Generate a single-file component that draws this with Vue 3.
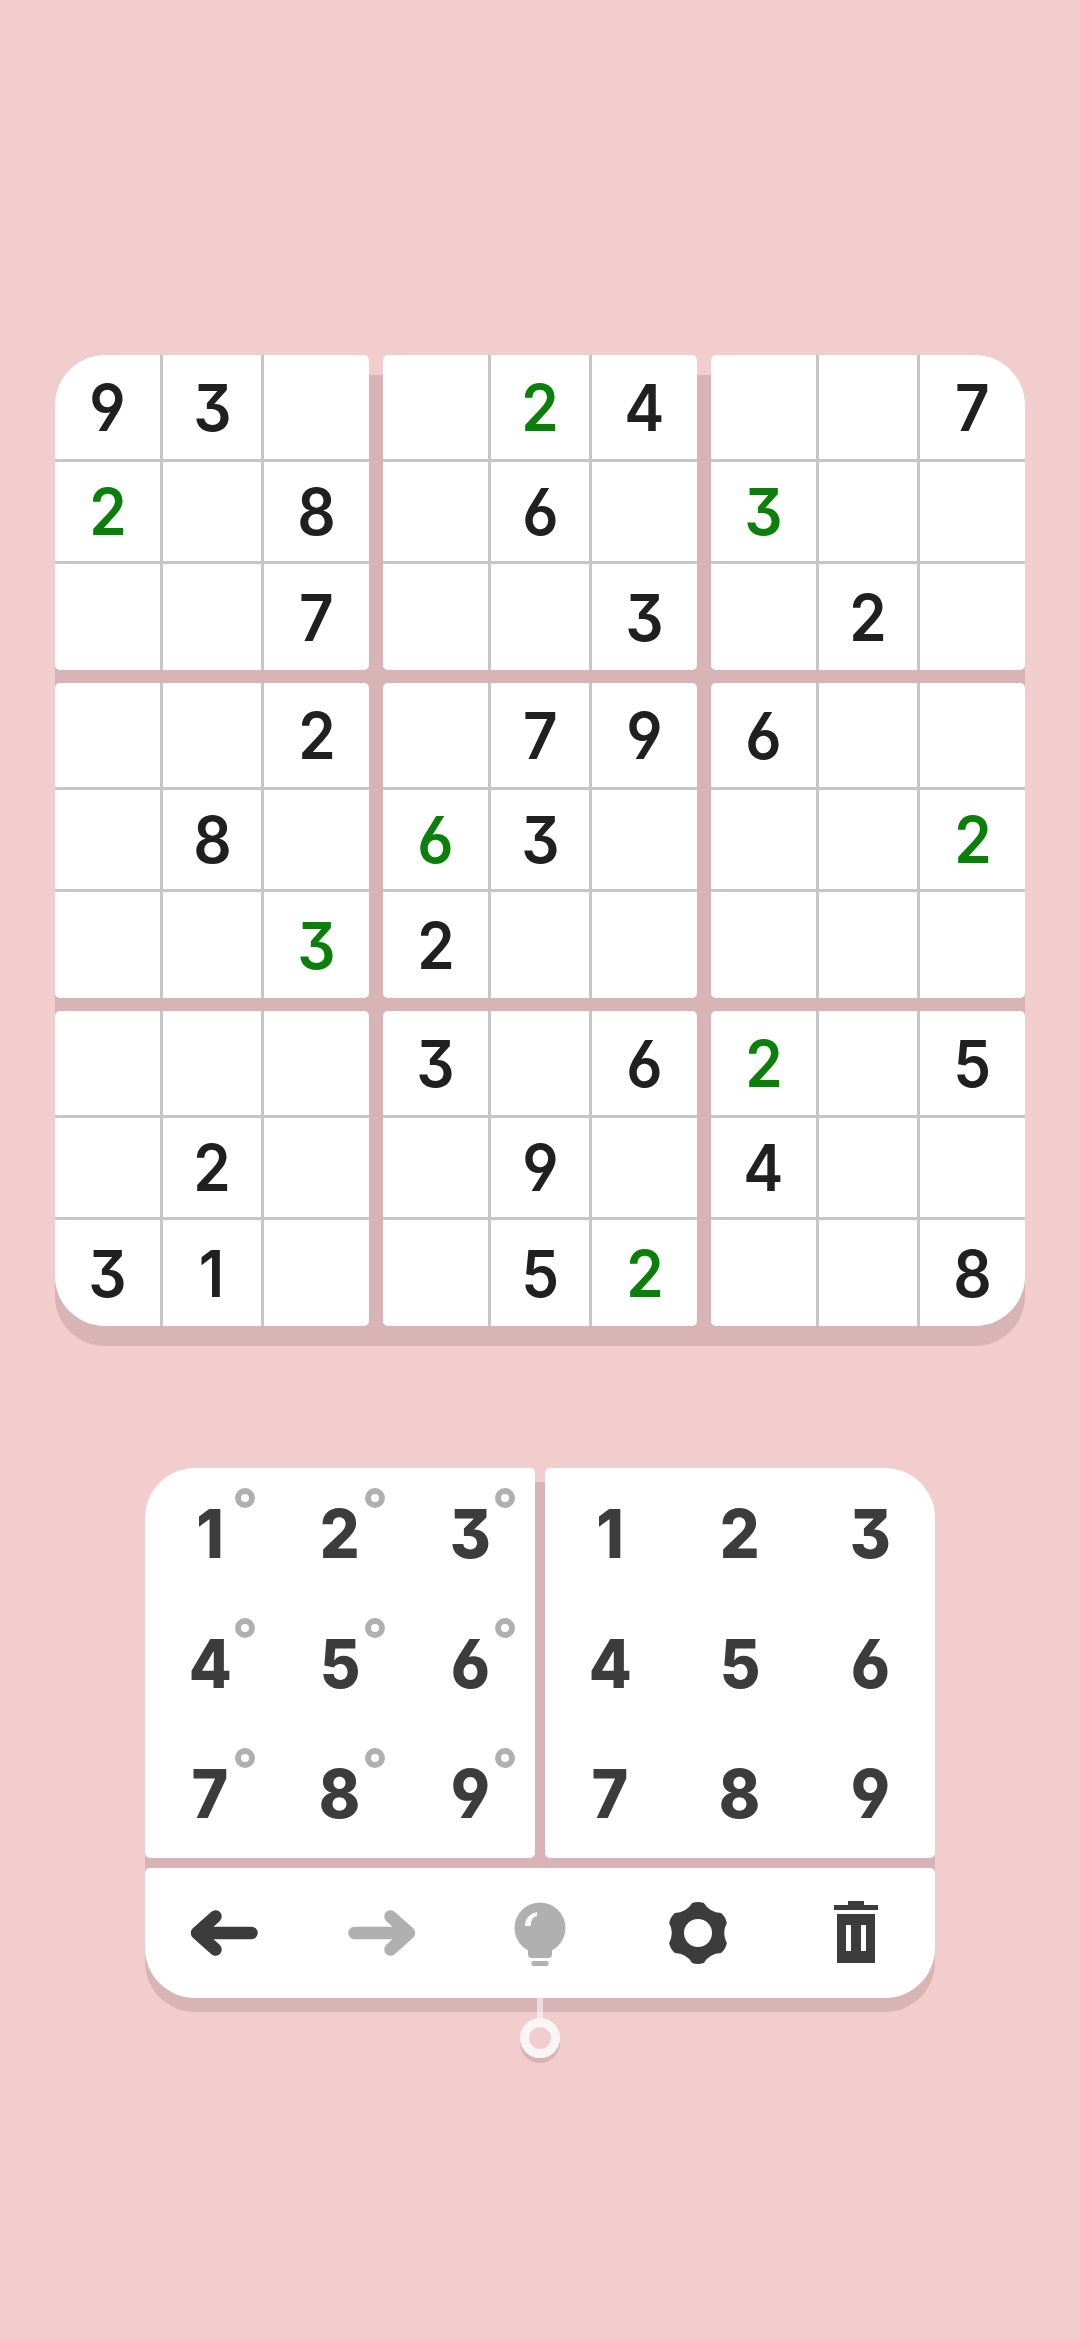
<template>
  <main class="page">
    <section class="board-wrap" aria-label="Sudoku board">
      <div class="board">
        <div
          v-for="(box, boxIndex) in boxes"
          :key="boxIndex"
          class="box"
          :class="cornerClass(boxIndex)"
        >
          <div v-for="(cell, cellIndex) in box" :key="cellIndex" class="cell" :class="{ solved: cell.solved }">
            <span class="digit">{{ cell.value }}</span>
          </div>
        </div>
      </div>
    </section>

    <section class="panel-wrap" aria-label="Controls">
      <div class="panel">
        <div class="keypads">
          <div class="keypad keypad-notes">
            <button v-for="n in digits" :key="n" type="button" class="key">
              <span class="digit">{{ n }}</span><span class="note-dot"></span>
            </button>
          </div>
          <div class="keypad keypad-plain">
            <button v-for="n in digits" :key="n" type="button" class="key">
              <span class="digit">{{ n }}</span>
            </button>
          </div>
        </div>

        <div class="toolbar">
          <button type="button" class="tool" aria-label="Undo">
            <svg width="80" height="60" viewBox="-40 -30 80 60">
              <path class="arrow dark" d="M27.500 0H-27L-8.500-16.500M-27 0L-8.500 16.500" />
            </svg>
          </button>
          <button type="button" class="tool" aria-label="Redo">
            <svg width="80" height="60" viewBox="-40 -30 80 60">
              <path class="arrow light" d="M-27.500 0H27L8.500-16.500M27 0L8.500 16.500" />
            </svg>
          </button>
          <button type="button" class="tool" aria-label="Hint">
            <svg width="60" height="70" viewBox="-30 -35 60 70">
              <circle cx="0" cy="-5" r="25.500" fill="#b0b0b0" />
              <path d="M-12 12H12V21Q12 25 8 25H-8Q-12 25-12 21Z" fill="#b0b0b0" />
              <rect x="-8.500" y="28" width="17" height="5" rx="2" fill="#b0b0b0" />
              <path d="M-15-7Q-15-18-3-21V-17Q-9-16-9.500-7Z" fill="#fff" />
            </svg>
          </button>
          <button type="button" class="tool" aria-label="Settings">
            <svg width="70" height="70" viewBox="-35 -35 70 70">
              <path :d="gearPath" fill="#3c3c3c" fill-rule="evenodd" />
            </svg>
          </button>
          <button type="button" class="tool" aria-label="Clear">
            <svg width="60" height="70" viewBox="-30 -35 60 70">
              <path
                fill="#3c3c3c"
                fill-rule="evenodd"
                d="M-8-32H8V-28H22V-23H-22V-28H-8ZM-19-19H19V30H-19ZM-10-8V18H-5V-8ZM5-8V18H10V-8Z"
              />
            </svg>
          </button>
        </div>
      </div>
    </section>

    <div class="pin" aria-hidden="true">
      <span class="pin-stem"></span>
      <span class="pin-ring"></span>
    </div>
  </main>
</template>

<script setup>
const puzzle = [
  "93.", ".24", "..7",
  "2.8", ".6.", "3..",
  "..7", "..3", ".2.",
  "..2", ".79", "6..",
  ".8.", "63.", "..2",
  "..3", "2..", "...",
  "...", "3.6", "2.5",
  ".2.", ".9.", "4..",
  "31.", ".52", "..8",
];

// row-col positions filled in by the player, shown in green
const solvedCells = new Set(["0-4", "1-0", "1-6", "4-3", "4-8", "5-2", "6-6", "8-5"]);

const digits = [1, 2, 3, 4, 5, 6, 7, 8, 9];

const boxes = Array.from({ length: 9 }, (_, boxIndex) => {
  const boxRow = Math.floor(boxIndex / 3);
  const boxCol = boxIndex % 3;
  const cells = [];

  for (let r = boxRow * 3; r < boxRow * 3 + 3; r += 1) {
    for (let c = boxCol * 3; c < boxCol * 3 + 3; c += 1) {
      const ch = puzzle[r * 3 + boxCol][c - boxCol * 3];
      cells.push({
        value: ch === "." ? "" : ch,
        solved: solvedCells.has(`${r}-${c}`),
      });
    }
  }

  return cells;
});

const cornerClass = (boxIndex) => {
  if (boxIndex === 0) return "corner-tl";
  if (boxIndex === 2) return "corner-tr";
  if (boxIndex === 6) return "corner-bl";
  if (boxIndex === 8) return "corner-br";
  return "";
};

const polar = (r, deg) => {
  const rad = (deg * Math.PI) / 180;
  return `${(r * Math.cos(rad)).toFixed(2)} ${(r * Math.sin(rad)).toFixed(2)}`;
};

const buildGear = () => {
  let d = "";

  for (let i = 0; i < 6; i += 1) {
    const mid = -90 + i * 60;
    const start = polar(30.5, mid - 11);
    const end = polar(30.5, mid + 11);
    const tip = polar(32, mid);
    d += `${i === 0 ? "M" : "Q"}${i === 0 ? "" : `${polar(23.5, mid - 30)} `}${start}Q${tip} ${end}`;
  }

  d += `Q${polar(23.5, -120)} ${polar(30.5, -101)}Z`;
  d += "M14 0A14 14 0 1 0-14 0A14 14 0 1 0 14 0Z";
  return d;
};

const gearPath = buildGear();
</script>

<style>
html,
body {
  margin: 0;
  background: #f2cdce;
}
</style>

<style scoped>
.page {
  width: 1080px;
  height: 2340px;
  position: relative;
  padding-top: 355px;
  box-sizing: border-box;
  font-family: "Inter", "Liberation Sans", sans-serif;
  font-feature-settings: "cv03", "cv04", "cv09";
  overflow: hidden;
}

.board-wrap {
  margin-left: 55px;
  width: 970px;
}

.board {
  display: grid;
  grid-template-columns: repeat(3, 314px);
  grid-template-rows: repeat(3, 315px);
  column-gap: 14px;
  row-gap: 13px;
  position: relative;
}

.board::before {
  content: "";
  position: absolute;
  inset: 20px 0 -20px;
  background: #d8b4b6;
  border-radius: 50px;
}

.box {
  position: relative;
  display: grid;
  grid-template-columns: 105px 98px 105px;
  grid-template-rows: 104px 99px 106px;
  gap: 3px;
  background: #c6c6c6;
  border-radius: 5px;
  overflow: hidden;
}

.corner-tl { border-top-left-radius: 50px; }
.corner-tr { border-top-right-radius: 50px; }
.corner-bl { border-bottom-left-radius: 50px; }
.corner-br { border-bottom-right-radius: 50px; }

.cell {
  background: #ffffff;
  display: flex;
  align-items: center;
  justify-content: center;
  font-size: 64px;
  font-weight: 600;
  color: #202020;
}

.cell.solved {
  color: #0a800a;
}

/* Inter runs wider than the app's typeface */
.digit {
  display: inline-block;
  transform: scaleX(0.94);
}

.panel-wrap {
  margin: 142px 0 0 145px;
  width: 790px;
}

.panel {
  position: relative;
  display: grid;
  gap: 10px;
}

.panel::before {
  content: "";
  position: absolute;
  inset: 14px 0 -14px;
  background: #d8b4b6;
  border-radius: 50px;
}

.keypads {
  position: relative;
  display: grid;
  grid-template-columns: 390px 390px;
  gap: 10px;
}

.keypad {
  height: 390px;
  background: #ffffff;
  display: grid;
  grid-template-columns: repeat(3, 130px);
  grid-template-rows: repeat(3, 130px);
}

.keypad-notes {
  border-radius: 50px 5px 5px 5px;
}

.keypad-plain {
  border-radius: 5px 50px 5px 5px;
}

.key {
  position: relative;
  border: none;
  background: none;
  padding: 0;
  font: inherit;
  font-size: 68px;
  font-weight: 800;
  color: #3c3c3c;
}

.key .digit {
  transform: scaleX(0.92);
}

.note-dot {
  position: absolute;
  left: 90px;
  top: 20px;
  width: 20px;
  height: 20px;
  box-sizing: border-box;
  border: 6px solid #b0b0b0;
  border-radius: 50%;
}

.toolbar {
  position: relative;
  height: 130px;
  background: #ffffff;
  border-radius: 5px 5px 50px 50px;
  display: grid;
  grid-template-columns: repeat(5, 158px);
}

.tool {
  border: none;
  background: none;
  padding: 0;
  display: flex;
  align-items: center;
  justify-content: center;
}

.arrow {
  fill: none;
  stroke-width: 12.500;
  stroke-linecap: round;
  stroke-linejoin: round;
}

.arrow.dark { stroke: #3c3c3c; }
.arrow.light { stroke: #b0b0b0; }

.pin {
  position: absolute;
  left: 520px;
  top: 1998px;
  width: 40px;
  display: flex;
  flex-direction: column;
  align-items: center;
}

.pin-stem {
  width: 6px;
  height: 20px;
  background: rgba(255, 255, 255, 0.55);
}

.pin-ring {
  width: 40px;
  height: 40px;
  box-sizing: border-box;
  border: 9px solid #faf6f6;
  border-radius: 50%;
  box-shadow: 0 5px 0 #d8b4b6;
}
</style>
